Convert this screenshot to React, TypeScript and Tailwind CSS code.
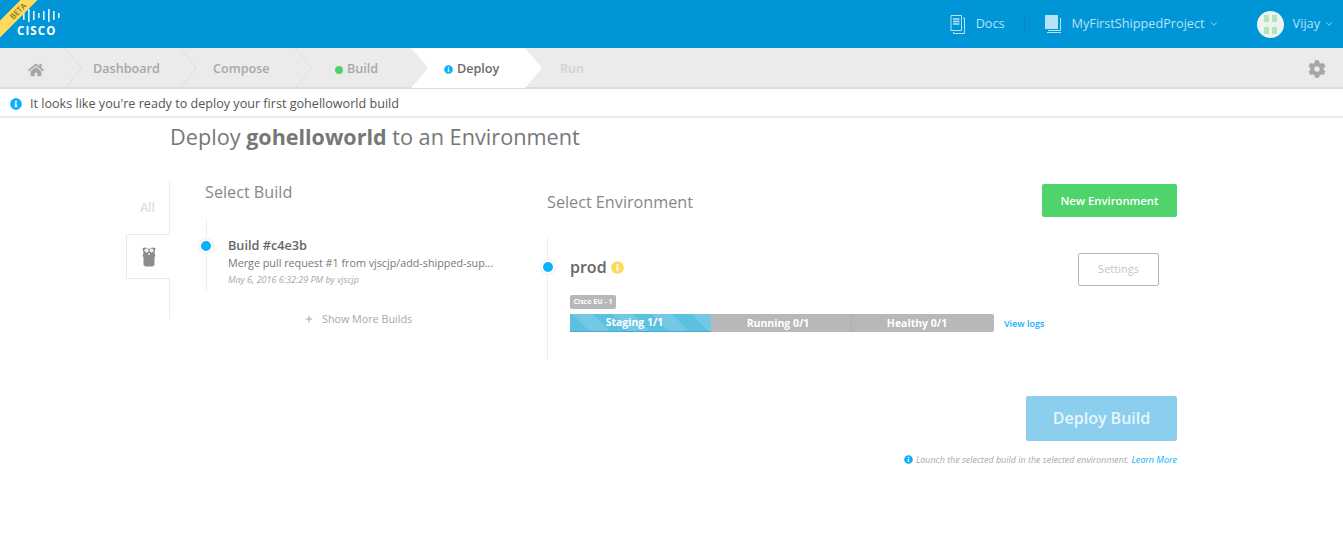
import { FaCog, FaHome, FaInfoCircle } from 'react-icons/fa';
import { ChevronDown, Plus } from 'lucide-react';

function Chevron() {
  return (
    <svg width="17" height="40" viewBox="0 0 17 40" className="shrink-0" fill="none">
      <path d="M0.5 0 L16.5 20 L0.5 40" stroke="#dedede" strokeWidth="1" />
    </svg>
  );
}

function CiscoLogo() {
  const bars = [
    [1, 5],
    [6, 9],
    [11, 13],
    [16, 9],
    [21, 5],
    [26, 9],
    [31, 13],
    [36, 9],
    [41, 5],
  ];
  return (
    <div className="flex flex-col items-start">
      <svg width="43" height="15" viewBox="0 0 43 15">
        {bars.map(([x, h]) => (
          <rect key={x} x={x} y={(15 - h) / 2} width="1.6" height={h} fill="#fff" opacity="0.9" />
        ))}
      </svg>
      <span className="mt-[1px] text-[11.5px] leading-[14px] font-bold tracking-[1.1px] text-white">CISCO</span>
    </div>
  );
}

function Gopher() {
  return (
    <svg width="14" height="20" viewBox="0 0 14 20">
      <path d="M0.5 1 L4 0.5 L7 2 L10 0.5 L13.5 1 L12.5 6 L13.5 9 L12.5 10 L12.5 18 L10.5 19.5 L3.5 19.5 L1.5 18 L1.5 10 L0.5 9 L1.5 6 Z" fill="#8c8c8c" />
      <circle cx="4.5" cy="3.6" r="2" fill="#f2f2f2" />
      <circle cx="9.5" cy="3.6" r="2" fill="#f2f2f2" />
      <rect x="6" y="6" width="2" height="2" fill="#d8d8d8" />
    </svg>
  );
}

function DocsIcon() {
  return (
    <svg width="15" height="19" viewBox="0 0 15 19" fill="none" stroke="#b6e2f6" strokeWidth="1">
      <path d="M1 .5 H11.5 V15.5 H1 Z" />
      <path d="M13 3 H14.5 V18.5 H3.5 V17" />
      <path d="M3 4 H9.5 M3 6.5 H9.5 M3 9 H9.5" strokeWidth="1.4" />
    </svg>
  );
}

function ProjectIcon() {
  return (
    <svg width="16" height="18" viewBox="0 0 16 18">
      <path d="M3 15.5 H15.5 V3" fill="none" stroke="#b6e2f6" strokeWidth="1" />
      <path d="M2 17.5 H16" stroke="#b6e2f6" strokeWidth="1" />
      <rect x="0" y="0" width="13" height="14" fill="#b6e2f6" />
    </svg>
  );
}

function Avatar() {
  return (
    <div className="flex h-[27px] w-[27px] items-center justify-center gap-[3px] rounded-full bg-[#eef3ef]">
      <div className="flex flex-col gap-[5px]">
        <div className="h-[7px] w-[5px] bg-[#b5e5bd]" />
        <div className="h-[7px] w-[5px] bg-[#b5e5bd]" />
      </div>
      <div className="flex flex-col gap-[5px]">
        <div className="h-[7px] w-[5px] bg-[#b5e5bd]" />
        <div className="h-[7px] w-[5px] bg-[#b5e5bd]" />
      </div>
    </div>
  );
}

function Dot() {
  return <div className="h-[14px] w-[14px] rounded-full border-[2px] border-white bg-[#0cb1fb] shadow-[0_0_0_1px_#eeeeee] box-border" />;
}

export default function App() {
  return (
    <div className="h-[540px] w-[1343px] overflow-hidden bg-white font-['Open_Sans',sans-serif] text-[#666]">
      <header className="relative flex h-12 items-center overflow-hidden bg-[#0095d6] text-[#b6e2f6]">
        <div className="absolute left-[-22px] top-[5px] flex h-[12px] w-[80px] rotate-[-45deg] items-center justify-center bg-[#ffdb5c] text-[8px] font-semibold text-[#8a7424]">
          BETA
        </div>
        <div className="ml-[17px] mt-[-2px]">
          <CiscoLogo />
        </div>
        <div className="ml-auto flex items-center">
          <DocsIcon />
          <span className="ml-[11px] text-[12.7px]">Docs</span>
          <div className="ml-[19px] h-[22px] w-px bg-[#0a86bd]" />
          <div className="ml-[20px]">
            <ProjectIcon />
          </div>
          <span className="ml-[11px] text-[12.7px]">MyFirstShippedProject</span>
          <ChevronDown className="ml-[4px] h-[10px] w-[10px]" strokeWidth={2} />
          <div className="ml-[38px]">
            <Avatar />
          </div>
          <span className="ml-[9px] text-[12.7px]">Vijay</span>
          <ChevronDown className="ml-[4px] mr-[9px] h-[10px] w-[10px]" strokeWidth={2} />
        </div>
      </header>

      <nav className="flex h-[41px] items-start border-b-2 border-[#dcdcdc] bg-[#ebebeb] text-[12.6px] font-semibold text-[#a8a8a8]">
        <div className="flex h-10 w-[65px] items-center pl-[28px] pt-[3px]">
          <FaHome className="h-[16px] w-[16px] text-[#a6a6a6]" />
        </div>
        <Chevron />
        <div className="flex h-10 w-[98px] items-center pl-[11px] pt-[3px]">Dashboard</div>
        <Chevron />
        <div className="flex h-10 w-[98px] items-center pl-[16px] pt-[3px]">Compose</div>
        <Chevron />
        <div className="flex h-10 w-[99px] items-center pl-[23px] pt-[3px]">
          <span className="mr-[4px] h-[8px] w-[8px] rounded-full bg-[#4fd36b]" />
          Build
        </div>
        <div className="flex h-10 w-[131px] items-center bg-white pl-[33px] pt-[3px] text-[#6b6b6b] [clip-path:polygon(0_0,114px_0,131px_50%,114px_100%,0_100%,17px_50%)]">
          <FaInfoCircle className="mr-[4px] h-[9px] w-[9px] text-[#0cb1fb]" />
          Deploy
        </div>
        <div className="flex h-10 items-center pl-[18px] pt-[2px] text-[#d2d2d2]">Run</div>
        <div className="ml-auto mr-[17px] flex h-10 items-center pt-[2px]">
          <FaCog className="h-[18px] w-[18px] text-[#a6a6a6]" />
        </div>
      </nav>

      <div className="flex h-[29px] items-center border-b-2 border-[#ebebeb] pl-[10px] pt-[3px] text-[12.6px] text-[#555]">
        <FaInfoCircle className="mr-[8px] h-[12px] w-[12px] text-[#0cb1fb]" />
        It looks like you're ready to deploy your first gohelloworld build
      </div>

      <main className="ml-[126px] w-[1051px]">
        <h1 className="ml-[44px] mt-[3px] text-[21.7px] leading-[32px] text-[#777]">
          Deploy <span className="text-[21.5px] font-bold">gohelloworld</span> to an Environment
        </h1>

        <div className="mt-[27px] flex items-start">
          <div className="flex h-[139px] w-[44px] shrink-0 flex-col border-r border-[#eeeeee]">
            <div className="flex h-[54px] items-center justify-center pt-[2px] text-[12px] font-semibold text-[#dddddd]">All</div>
            <div className="mr-[-1px] flex h-[45px] items-center justify-center rounded-l-[2px] border border-r-0 border-[#e8e8e8] bg-white">
              <Gopher />
            </div>
          </div>

          <section className="ml-[35px] w-[342px] shrink-0">
            <h2 className="text-[16.2px] leading-[24px] text-[#888]">Select Build</h2>
            <div className="relative ml-[1px] mt-[14px] h-[74px] border-l border-[#eeeeee] pl-[21px] pt-[18px]">
              <div className="absolute left-[-8px] top-[21px]">
                <Dot />
              </div>
              <div className="text-[12.7px] leading-[18px] font-semibold text-[#666]">Build #c4e3b</div>
              <div className="mt-[1px] text-[10.75px] leading-[17px] text-[#777]">Merge pull request #1 from vjscjp/add-shipped-sup...</div>
              <div className="mt-[2px] text-[9px] leading-[12px] italic text-[#a8a8a8]">May 6, 2016 6:32:29 PM by vjscjp</div>
            </div>
            <div className="ml-[99px] mt-[18px] flex items-center text-[10.75px] leading-[18px] text-[#a8a8a8]">
              <Plus className="mr-[8px] h-[10px] w-[10px]" strokeWidth={2.5} />
              Show More Builds
            </div>
          </section>

          <section className="flex-1 pt-[4px]">
            <div className="flex items-start justify-between">
              <h2 className="mt-[6px] text-[16.2px] leading-[24px] text-[#888]">Select Environment</h2>
              <button className="h-[33px] w-[135px] rounded-[2px] bg-[#4fd36b] pt-[2px] text-[11.3px] font-semibold text-white">
                New Environment
              </button>
            </div>
            <div className="relative mt-[21px] h-[122px] border-l border-[#eeeeee] pl-[22px] pt-[15px]">
              <div className="absolute left-[-7px] top-[22px]">
                <Dot />
              </div>
              <div className="flex items-start justify-between pr-[18px]">
                <div className="flex items-center pt-[2px]">
                  <span className="text-[16px] leading-[24px] font-semibold text-[#666]">prod</span>
                  <FaInfoCircle className="ml-[4px] h-[13px] w-[13px] text-[#ffd95a]" />
                </div>
                <button className="h-[33px] w-[81px] rounded-[2px] border border-[#b5b5b5] text-[11px] text-[#c6c6c6]">
                  Settings
                </button>
              </div>
              <div className="mt-[9px] flex h-[14px] w-[46px] items-center justify-center rounded-[2px] bg-[#b8b8b8] text-[7px] font-bold text-white">
                Cisco EU - 1
              </div>
              <div className="mt-[5px] flex items-center">
                <div className="flex h-[18px] w-[424px] overflow-hidden rounded-r-[2px] bg-[#b8b8b8] pt-0 text-[10.5px] font-bold text-white">
                  <div className="flex w-[141px] items-center justify-center border-b border-[#4aa9c9] bg-[repeating-linear-gradient(45deg,#5cc0e0,#5cc0e0_14px,#72c8e5_14px,#72c8e5_28px)] pr-[12px] pt-[1px]">
                    Staging 1/1
                  </div>
                  <div className="flex w-[141px] items-center justify-center border-r border-[#adadad] pr-[6px] pt-[2px]">Running 0/1</div>
                  <div className="flex flex-1 items-center justify-center pr-[12px] pt-[2px]">Healthy 0/1</div>
                </div>
                <a className="ml-[10px] pt-[2px] text-[9px] font-semibold text-[#0cb1fb]">View logs</a>
              </div>
            </div>
          </section>
        </div>

        <div className="mt-[36px] flex flex-col items-end">
          <button className="h-[45px] w-[151px] rounded-[2px] bg-[#8bceee] pb-[2px] text-[16px] font-semibold text-[#e8f6fc]">
            Deploy Build
          </button>
          <p className="mt-[12px] flex items-center text-[8.95px] italic text-[#a8a8a8]">
            <FaInfoCircle className="mr-[3px] h-[9px] w-[9px] text-[#0cb1fb]" />
            Launch the selected build in the selected environment.&nbsp;
            <a className="text-[9px] text-[#0cb1fb]">Learn More</a>
          </p>
        </div>
      </main>
    </div>
  );
}
